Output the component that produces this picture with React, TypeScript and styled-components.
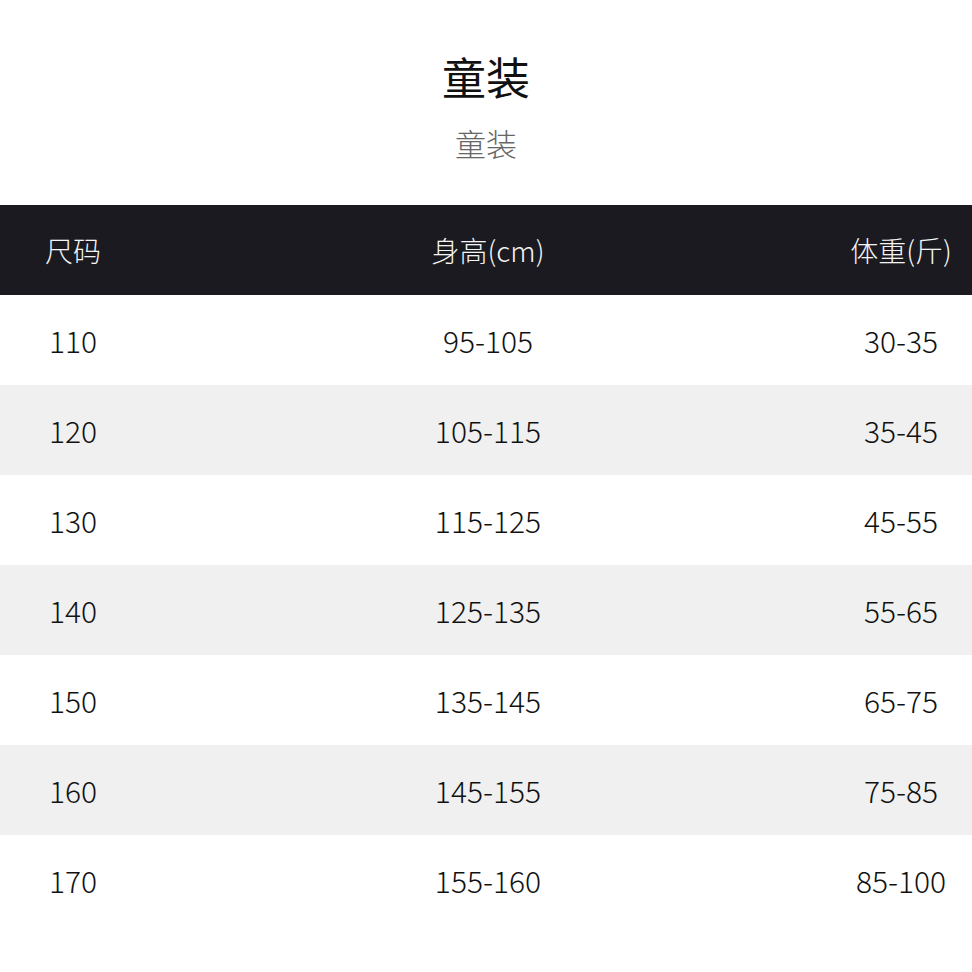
import React from "react";
import styled, { createGlobalStyle } from "styled-components";

const rows = [
    ["110", "95-105", "30-35"],
    ["120", "105-115", "35-45"],
    ["130", "115-125", "45-55"],
    ["140", "125-135", "55-65"],
    ["150", "135-145", "65-75"],
    ["160", "145-155", "75-85"],
    ["170", "155-160", "85-100"],
];

export default function App() {
    return (
        <>
            <GlobalStyle />
            <Page>
                <Heading>
                    <Title>童装</Title>
                    <Subtitle>童装</Subtitle>
                </Heading>
                <Table>
                    <HeadRow>
                        <Cell>尺码</Cell>
                        <Cell>身高(cm)</Cell>
                        <Cell>体重(斤)</Cell>
                    </HeadRow>
                    {rows.map((row, i) => (
                        <BodyRow key={i} striped={i % 2 === 1}>
                            {row.map((value, j) => (
                                <Cell key={j}>{value}</Cell>
                            ))}
                        </BodyRow>
                    ))}
                </Table>
            </Page>
        </>
    );
}

const GlobalStyle = createGlobalStyle`
    body {
        margin: 0;
        background: #fff;
        font-family: "Noto Sans CJK SC", "Noto Sans", sans-serif;
    }
`;

const Page = styled.div`
    width: 972px;
    height: 972px;
    background: #fff;
    overflow: hidden;
`;

const Heading = styled.div`
    height: 205px;
    display: flex;
    flex-direction: column;
    align-items: center;
    padding-top: 48px;
    box-sizing: border-box;
`;

const Title = styled.div`
    font-size: 44px;
    line-height: 56px;
    color: #111;
`;

const Subtitle = styled.div`
    margin-top: 19px;
    font-size: 31px;
    line-height: 40px;
    font-weight: 300;
    color: #666;
`;

const Table = styled.div`
    display: flex;
    flex-direction: column;
`;

const Row = styled.div`
    display: grid;
    grid-template-columns: 146px 1fr 142px;
    height: 90px;
    align-items: center;
    text-align: center;
    font-weight: 300;
`;

const HeadRow = styled(Row)`
    background: #1a1a20;
    color: #f4f4f4;
    font-size: 28px;
`;

const BodyRow = styled(Row)<{ striped: boolean }>`
    background: ${({ striped }) => (striped ? "#f0f0f0" : "#fff")};
    color: #111;
    font-size: 30px;
`;

const Cell = styled.div`
    white-space: nowrap;
`;
